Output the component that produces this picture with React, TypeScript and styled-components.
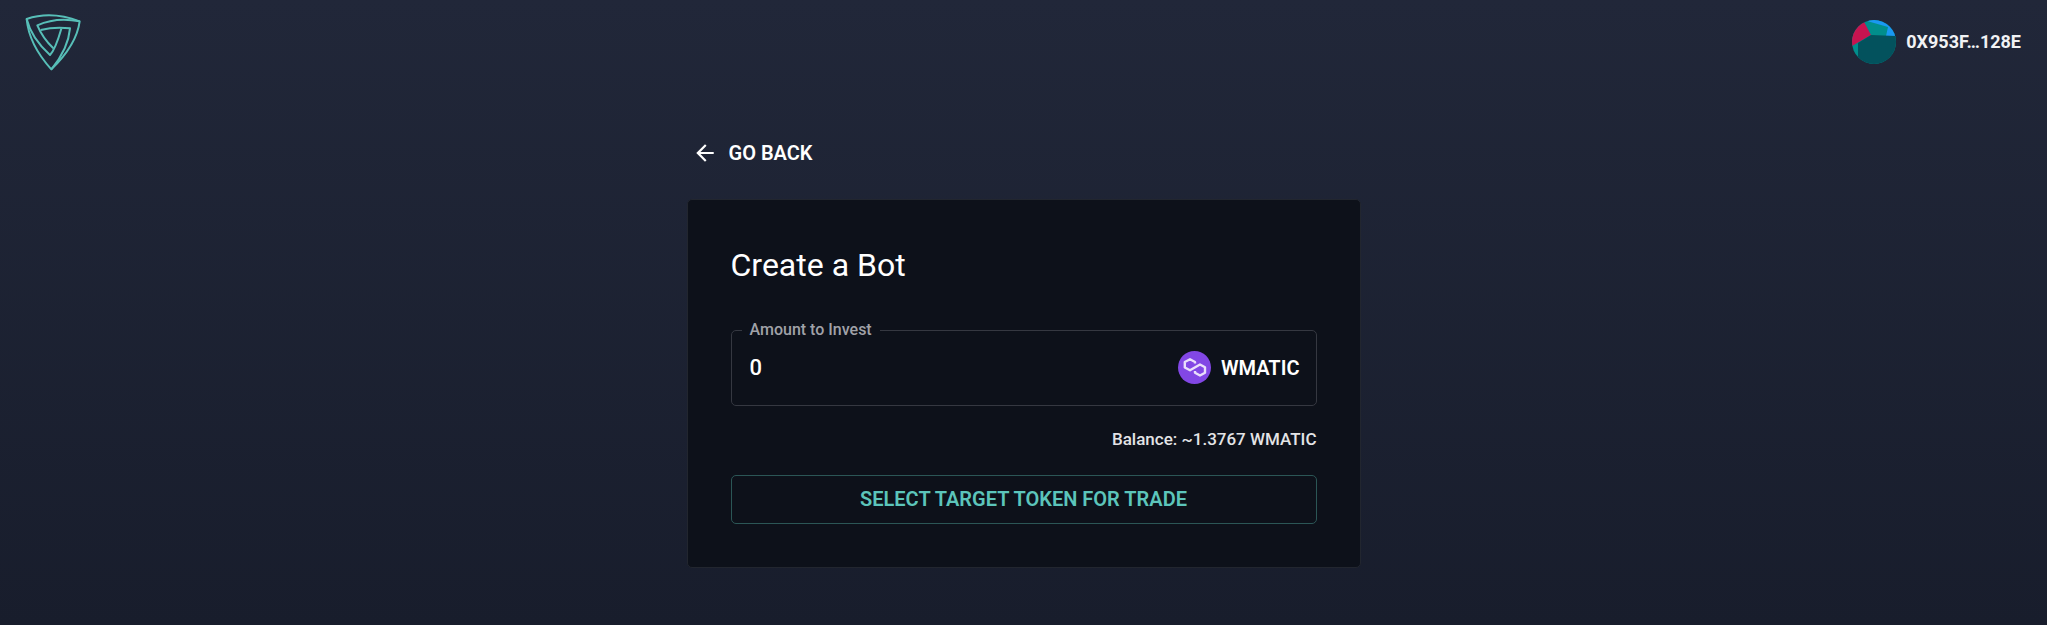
import React, { useState } from "react";
import styled, { createGlobalStyle } from "styled-components";

const GlobalStyle = createGlobalStyle`
  *, *::before, *::after { box-sizing: border-box; }
  body {
    margin: 0;
    background: #181d2b;
    color: #fff;
    font-family: Roboto, "Liberation Sans", sans-serif;
    font-weight: 500;
  }
  button, input { font: inherit; color: inherit; }
`;

const Page = styled.div`
  min-height: 100vh;
  background: linear-gradient(180deg, #212739 0%, #181d2c 100%);
`;

const Header = styled.header`
  display: flex;
  justify-content: space-between;
  align-items: center;
  height: 84px;
  padding: 0 26px 0 24px;
`;

const HomeLink = styled.a`
  display: flex;
`;

const AccountButton = styled.button`
  display: flex;
  align-items: center;
  gap: 10px;
  padding: 0;
  border: 0;
  background: none;
  color: #f1f2f4;
  font-size: 18px;
  font-weight: 700;
  line-height: 24px;
  text-transform: uppercase;
  cursor: pointer;
`;

const Main = styled.main`
  width: 100%;
  max-width: 674px;
  margin: 0 auto;
  padding: 48px 0;
`;

const BackButton = styled.button`
  display: flex;
  align-items: center;
  gap: 12px;
  margin-bottom: 25px;
  padding: 8px 6px;
  border: 0;
  background: none;
  font-size: 20px;
  font-weight: 600;
  line-height: 26px;
  text-transform: uppercase;
  cursor: pointer;
`;

const Card = styled.section`
  padding: 42px 43px 43px;
  border: 1px solid #22262f;
  border-radius: 5px;
  background: #0d111a;
`;

const Title = styled.h1`
  margin: 0 0 32px;
  font-size: 32px;
  font-weight: 400;
  line-height: 46px;
`;

const Field = styled.fieldset`
  display: flex;
  align-items: center;
  margin: 0;
  min-width: 0;
  height: 86px;
  padding: 0 16px 10px 18px;
  border: 1px solid #353841;
  border-radius: 5px;
`;

const Legend = styled.legend`
  margin-left: -8px;
  padding: 0 8px;
  color: #a0a2a8;
  font-size: 16px;
  line-height: 20px;
`;

const FieldRow = styled.div`
  display: flex;
  align-items: center;
  height: 56px;
  width: 100%;
`;

const AmountInput = styled.input`
  flex: 1;
  min-width: 0;
  padding: 0;
  border: 0;
  outline: 0;
  background: none;
  font-size: 22px;
  line-height: 32px;
`;

const Token = styled.span`
  display: flex;
  align-items: center;
  gap: 10px;
  font-size: 20px;
  font-weight: 600;
`;

const Balance = styled.p`
  margin: 21px 0 24px;
  color: #e3e4e6;
  font-size: 17px;
  line-height: 24px;
  text-align: right;
`;

const SelectTokenButton = styled.button`
  display: block;
  width: 100%;
  padding: 10px 20px;
  border: 1px solid #2b5656;
  border-radius: 5px;
  background: none;
  color: #5cc5bb;
  font-size: 20px;
  font-weight: 600;
  line-height: 27px;
  text-transform: uppercase;
  cursor: pointer;
`;

const Logo = () => (
  <svg width="60" height="60" viewBox="0 0 180 180" fill="none" stroke="#57bfb8" strokeWidth="6" strokeLinejoin="round" aria-hidden="true">
    <path d="M8 21Q82 -4 167 28Q158 98 82 172Q15 98 8 21Z" />
    <path d="M8 21Q22 78 78 129Q94 112 112 50" />
    <path d="M167 28Q97 14 40 40Q56 78 88 109" />
    <path d="M50 54Q93 43 138 49Q133 110 82 172" />
  </svg>
);

const Avatar = () => (
  <svg width="44" height="44" viewBox="0 0 44 44" aria-hidden="true">
    <defs>
      <clipPath id="avatar">
        <circle cx="22" cy="22" r="22" />
      </clipPath>
    </defs>
    <g clipPath="url(#avatar)">
      <rect width="44" height="44" fill="#018e8c" />
      <path d="M12 0H44V17L34 16L36 7L15 1Z" fill="#1a98f2" />
      <path d="M0 0H11L19 15L0 26Z" fill="#c81450" />
      <path d="M6 23L19 15L44 16V44H6Z" fill="#03525d" />
    </g>
  </svg>
);

const BackArrow = () => (
  <svg width="24" height="24" viewBox="1 1 22 22" fill="currentColor" aria-hidden="true">
    <path d="M20 11H7.83l5.59-5.59L12 4l-8 8 8 8 1.41-1.41L7.83 13H20v-2z" />
  </svg>
);

const TokenIcon = () => (
  <svg width="33" height="33" viewBox="0 0 33 33" aria-hidden="true">
    <circle cx="16.5" cy="16.5" r="16.5" fill="#8247e5" />
    <path
      d="M17 12.500V11L12 8.300L6.800 11V16.500L12 19.300L22 13.500L27 16.300V21.700L22 24.500L17 21.700V20"
      fill="none"
      stroke="#eadffb"
      strokeWidth="2.4"
      strokeLinejoin="round"
    />
  </svg>
);

export default function App() {
  const [amount, setAmount] = useState("0");
  return (
    <>
      <GlobalStyle />
      <Page>
        <Header>
          <HomeLink href="#" aria-label="Home">
            <Logo />
          </HomeLink>
          <AccountButton type="button">
            <Avatar />
            0x953f…128e
          </AccountButton>
        </Header>
        <Main>
          <BackButton type="button">
            <BackArrow />
            Go back
          </BackButton>
          <Card>
            <Title>Create a Bot</Title>
            <Field>
              <Legend>
                <label htmlFor="amount">Amount to Invest</label>
              </Legend>
              <FieldRow>
                <AmountInput
                  id="amount"
                  inputMode="decimal"
                  value={amount}
                  onChange={(event) => setAmount(event.target.value)}
                />
                <Token>
                  <TokenIcon />
                  WMATIC
                </Token>
              </FieldRow>
            </Field>
            <Balance>Balance: ~1.3767 WMATIC</Balance>
            <SelectTokenButton type="button">Select target token for trade</SelectTokenButton>
          </Card>
        </Main>
      </Page>
    </>
  );
}
